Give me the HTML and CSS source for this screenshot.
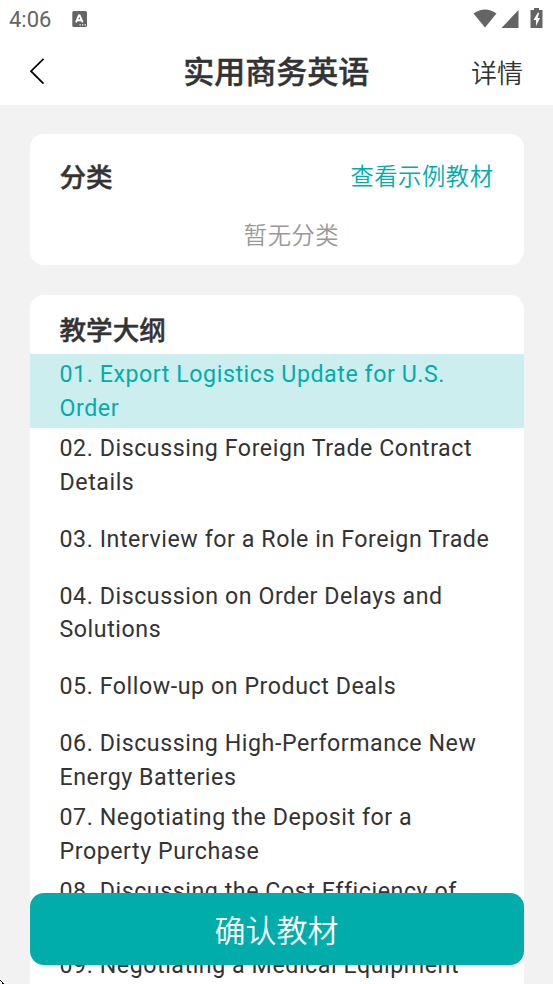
FILE: index.html
```html
<!DOCTYPE html>
<html lang="zh-CN">
<head>
<meta charset="utf-8">
<title>实用商务英语</title>
<link rel="stylesheet" href="styles.css">
</head>
<body>
<div class="screen">
  <div class="status">
    <span class="time">4:06</span>
    <svg class="badge" width="16" height="16" viewBox="0 0 16 16"><rect x="0.300" y="0" width="14.700" height="16" rx="1.500" fill="#646464"/><path d="M4 11.300 6.900 4.500h.8l2.900 6.800M5.300 9.200h4" fill="none" stroke="#fff" stroke-width="1.900"/><path d="M7.500 13.800h1.300M10 13.800h1.300M12.500 13.800h1.300" stroke="#fff" stroke-width="1.200"/></svg>
    <svg class="signals" width="72" height="22" viewBox="0 0 72 22"><path d="M1.500 5.500Q13-2.500 24.500 5.500L13 19.500Z" fill="#646464"/><path d="M46.500 2v18H29.500Z" fill="#646464"/><path d="M58.500 2H62V0h5v2h3.500v18h-12Z" fill="#646464"/><path d="M65.800 4.800 61.500 12h2.500v6l4-8h-2.300l1.500-5.200Z" fill="#fff"/></svg>
  </div>
  <header class="nav">
    <svg class="back" width="16" height="28" viewBox="0 0 16 28"><path d="M13.500 0.800 1 13.200l12.500 12.500" fill="none" stroke="#000" stroke-width="1.700"/></svg>
    <h1>实用商务英语</h1>
    <span class="detail">详情</span>
  </header>
  <main>
    <section class="card category">
      <div class="row"><h2>分类</h2><a class="sample">查看示例教材</a></div>
      <p class="empty">暂无分类</p>
    </section>
    <section class="card outline">
      <h2>教学大纲</h2>
      <ul>
        <li class="active">01. Export Logistics Update for U.S.<br>Order</li>
        <li>02. Discussing Foreign Trade Contract<br>Details</li>
        <li class="single">03. Interview for a Role in Foreign Trade</li>
        <li>04. Discussion on Order Delays and<br>Solutions</li>
        <li class="single">05. Follow-up on Product Deals</li>
        <li>06. Discussing High-Performance New<br>Energy Batteries</li>
        <li>07. Negotiating the Deposit for a<br>Property Purchase</li>
        <li>08. Discussing the Cost Efficiency of<br>Solar Panels</li>
        <li>09. Negotiating a Medical Equipment</li>
      </ul>
    </section>
  </main>
  <button class="confirm">确认教材</button>
  <svg class="corner" width="4" height="4" viewBox="0 0 4 4"><path d="M0 0h1v1h1v1H1V1H0ZM2 2h1v1h1v1H2Z" fill="#000"/></svg>
</div>
</body>
</html>
```
FILE: styles.css
```css
* { box-sizing: border-box; margin: 0; padding: 0; }
body { font-family: Roboto, "Noto Sans CJK SC", sans-serif; color: #333; }
.screen { position: relative; width: 553px; height: 984px; overflow: hidden; background: #f2f2f2; }
.status { display: flex; height: 38px; padding: 0 9px; align-items: center; background: #fff; color: #646464; }
.time { width: 62px; padding-top: 1px; font-size: 22px; }
.badge { margin-left: 1px; }
.signals { margin-left: auto; }
.nav { display: grid; grid-template-columns: 100px 1fr 100px; align-items: center; height: 67px; padding: 0 30px 0 29.500px; background: #fff; }
h1 { padding-top: 2px; font-size: 31px; line-height: 40px; font-weight: 500; text-align: center; -webkit-text-stroke: 0.400px #333; }
.detail { font-size: 26px; font-weight: 350; text-align: right; }
main { padding: 29px 29.500px; }
.card { background: #fff; border-radius: 14px; overflow: hidden; }
.category { height: 131px; padding: 24px 30px; }
.row { display: flex; justify-content: space-between; align-items: center; height: 40px; }
h2 { font-size: 26.600px; line-height: 36px; font-weight: 500; -webkit-text-stroke: 0.400px #333; }
.sample { margin-top: -2px; font-size: 23.300px; letter-spacing: 0.550px; font-weight: 350; line-height: 36px; color: #00adab; }
.empty { margin-top: 20px; padding-left: 30px; font-size: 23.300px; letter-spacing: 0.550px; font-weight: 350; line-height: 36px; text-align: center; color: #999; }
.outline { height: 800px; margin-top: 30px; padding-top: 18px; }
.outline h2 { padding-left: 30px; }
ul { list-style: none; margin-top: 5px; }
li { height: 73.850px; padding: 4px 30px 2px; font-size: 23.200px; line-height: 33.900px; letter-spacing: 0.560px; white-space: nowrap; }
.active { color: #00adab; background: #cceeee; }
.single { display: flex; align-items: center; }
.confirm { position: absolute; left: 29.500px; top: 892.500px; width: 494px; height: 72px; border: 0; border-radius: 14px; background: #00adab; color: #fff; font: 350 31px Roboto, "Noto Sans CJK SC", sans-serif; }
.corner { position: absolute; left: 0; bottom: 0; }
```
